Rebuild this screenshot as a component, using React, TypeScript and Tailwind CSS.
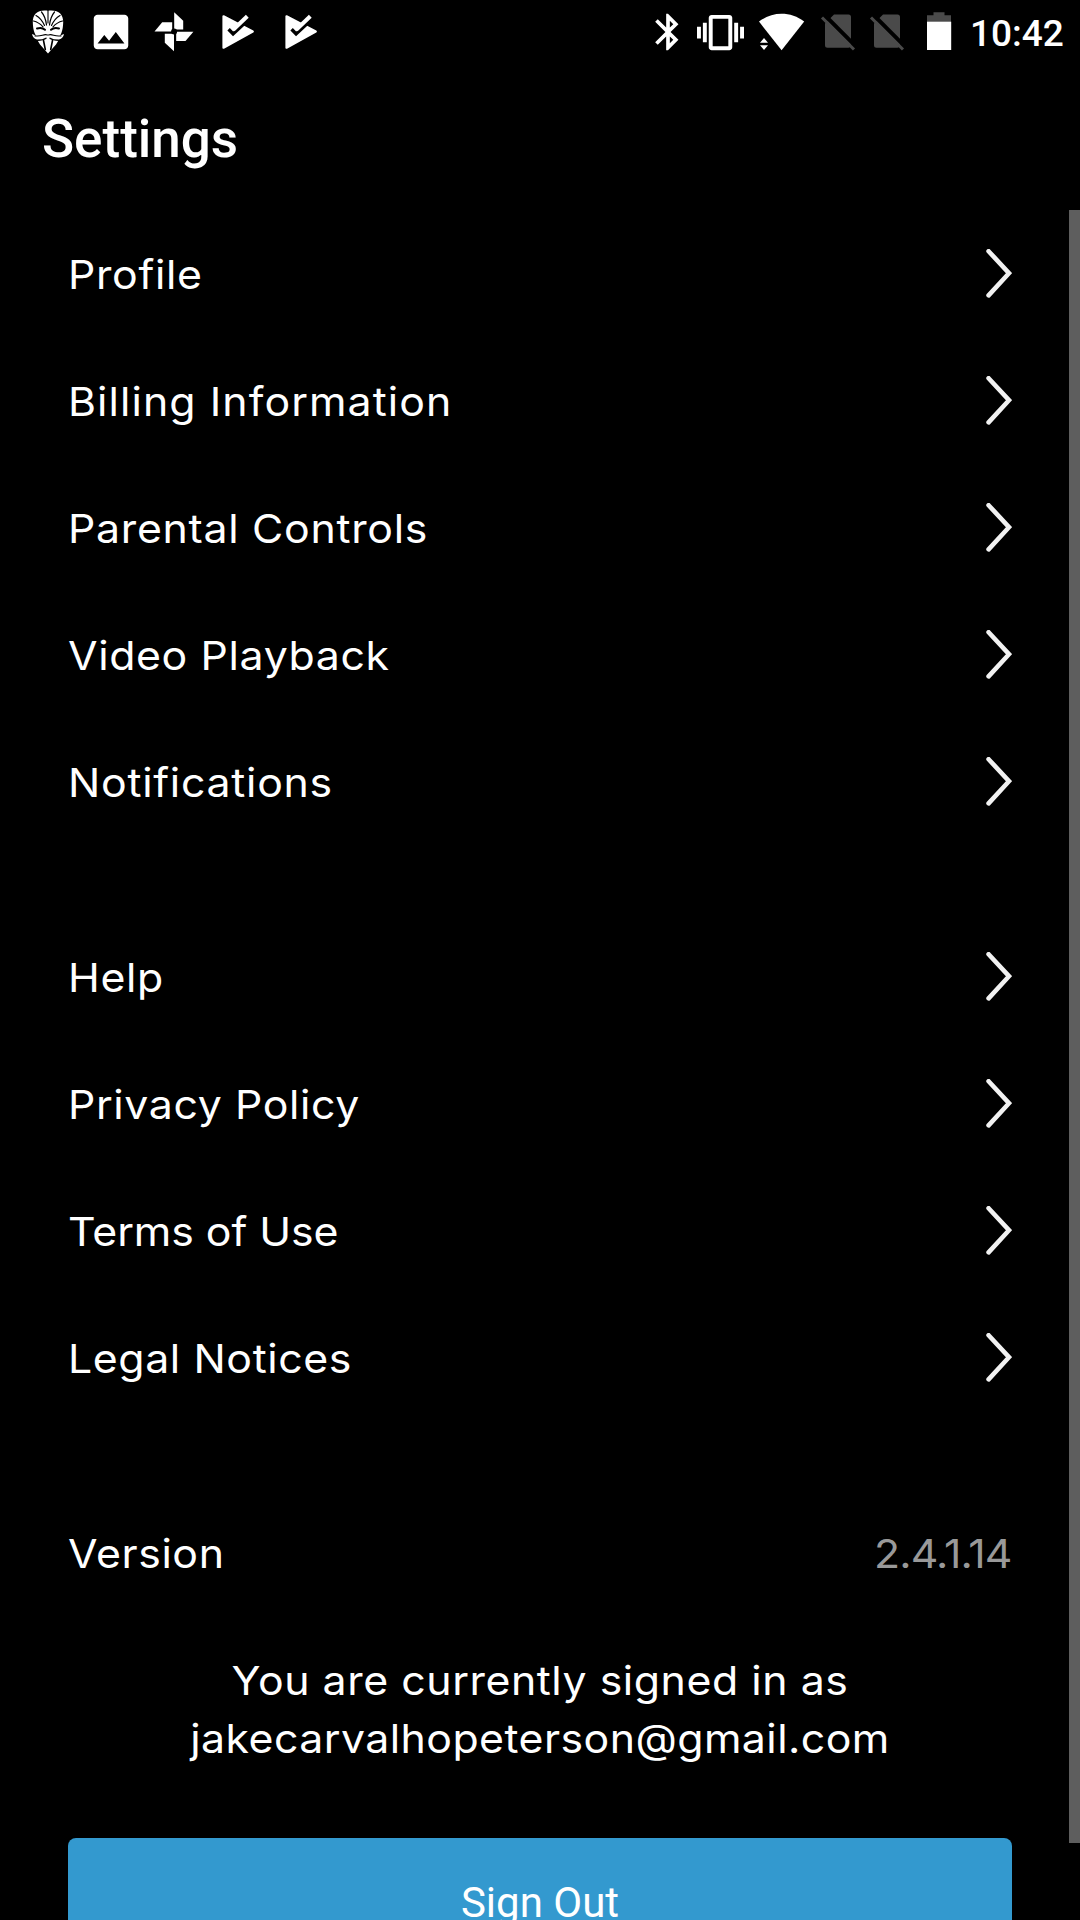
import type { ReactNode } from "react"
import { MdBluetooth, MdImage, MdVibration } from "react-icons/md"

type Item = { label: string; tracking: string }

const ACCOUNT_ITEMS: Item[] = [
  { label: "Profile", tracking: "tracking-[0.62px]" },
  { label: "Billing Information", tracking: "tracking-[1.02px]" },
  { label: "Parental Controls", tracking: "tracking-[0.67px]" },
  { label: "Video Playback", tracking: "tracking-[0.6px]" },
  { label: "Notifications", tracking: "tracking-[0.69px]" },
]

const SUPPORT_ITEMS: Item[] = [
  { label: "Help", tracking: "tracking-[0.56px]" },
  { label: "Privacy Policy", tracking: "tracking-[0.58px]" },
  { label: "Terms of Use", tracking: "tracking-[-0.05px]" },
  { label: "Legal Notices", tracking: "tracking-[0.57px]" },
]

function MaskIcon() {
  return (
    <svg viewBox="0 0 46 46" className="h-[46px] w-[46px]" fill="none">
      <path
        d="M23 1.8C13 .5 7.6 5 7.8 13c.1 4 .6 8 1.8 11l1.2 2.6L7 25c.6 3 2 4.8 5 5.6L15 35.5 23 44.5 31 35.5 34 30.6c3-.8 4.4-2.6 5-5.6l-3.8 1.6L36.4 24c1.2-3 1.7-7 1.8-11C38.4 5 33 .5 23 1.8z"
        fill="#fff"
      />
      <g stroke="#000" strokeLinecap="round">
        <path d="M23 1v13" strokeWidth="1.1" />
        <path d="M21.5 16C20.8 10 19 6 16.5 3M24.5 16C25.2 10 27 6 29.5 3" strokeWidth="1.2" />
        <path d="M19.5 16.5C17.5 12 14.5 8.5 11 6.5M26.5 16.5c2-4.5 5-8 8.5-10" strokeWidth="1.2" />
        <path d="M18 17.8C15 14.5 12 12.8 8.5 12M28 17.8c3-3.3 6-5 9.5-5.8" strokeWidth="1.2" />
        <path d="M12 19.5c3-1 6-.5 8 1.3M34 19.5c-3-1-6-.5-8 1.3" strokeWidth="2" />
        <path d="M22.5 26c-4-1.5-6 2-12.5.8M23.5 26c4-1.5 6 2 12.5.8" strokeWidth="1.2" />
        <path d="M12.5 31.2c4 0 6.5-.6 8.5-2M33.5 31.2c-4 0-6.5-.6-8.5-2" strokeWidth="1.4" />
        <path d="M18.5 31.5l1.8 9M27.5 31.5l-1.8 9" strokeWidth="1.6" />
      </g>
    </svg>
  )
}

function PinwheelIcon() {
  return (
    <svg viewBox="0 0 46 46" className="h-[46px] w-[46px]" fill="#fff">
      <path d="M23.2 3.3l9 8.4v8.8h-9z" />
      <path d="M42.4 22.7l-7.9 9.2h-9.3v-9.2z" />
      <path d="M23 42.2l-9.2-8.5v-9H23z" />
      <path d="M3.5 22.5l7.7-9.2h10v9.2z" />
      <circle cx="23.1" cy="22.6" r="3" fill="#000" />
    </svg>
  )
}

function PlayCheckIcon() {
  return (
    <svg viewBox="0 0 46 46" className="h-[46px] w-[46px]" fill="none">
      <path d="M9.5 7.3L38.8 22.6 9.5 38.7z" fill="#fff" stroke="#fff" strokeWidth="2.2" strokeLinejoin="round" />
      <path d="M14.6 20.2l4.5 4.7L37.5 7.8" stroke="#000" strokeWidth="3.4" />
      <path d="M19.2 20.8L33.3 7.3" stroke="#fff" strokeWidth="4" />
    </svg>
  )
}

function WifiIcon() {
  return (
    <svg viewBox="0 0 48 46" className="ml-[14px] h-[46px] w-[48px]" fill="#fff">
      <path d="M1 12.6C14 2 33 2 46.2 12.6L23.6 41.2z" />
      <path d="M6 29l4 4.8H2zM6 41l-4-4.8h8z" />
    </svg>
  )
}

function NoSimIcon({ className }: { className: string }) {
  return (
    <svg viewBox="0 0 36 46" className={`h-[46px] w-[36px] ${className}`} fill="none">
      <path d="M14 5.5h14.5A2.5 2.5 0 0 1 31 8v28a2.7 2.7 0 0 1-2.5 2.7h-21A2.5 2.5 0 0 1 5 36.2V14.5z" fill="#4a4a4a" />
      <path d="M4.5 6L37 38.5" stroke="#000" strokeWidth="4" />
      <path d="M2 8.5l32 32" stroke="#4a4a4a" strokeWidth="3" />
    </svg>
  )
}

function BatteryIcon() {
  return (
    <svg viewBox="0 0 26 46" className="ml-[21px] h-[46px] w-[26px]">
      <path d="M7.5 3.3h11v3H25v7H1v-7h6.5z" fill="#4a4a4a" />
      <path d="M1 12.7h24.2V41H1z" fill="#fff" />
    </svg>
  )
}

function StatusBar() {
  return (
    <header className="flex h-16 shrink-0 items-center justify-between pl-[24.5px] text-white">
      <div className="flex items-center gap-[17px]">
        <MaskIcon />
        <MdImage className="h-[46px] w-[46px]" />
        <PinwheelIcon />
        <PlayCheckIcon />
        <PlayCheckIcon />
      </div>
      <div className="flex items-center">
        <MdBluetooth className="h-[44px] w-[44px]" />
        <MdVibration className="ml-[7px] h-[47px] w-[47px]" />
        <WifiIcon />
        <NoSimIcon className="ml-[14px]" />
        <NoSimIcon className="ml-[13px]" />
        <BatteryIcon />
        <span className="ml-[18px] w-[110px] pt-[3px] font-['Roboto',sans-serif] text-[37px] font-medium leading-none">10:42</span>
      </div>
    </header>
  )
}

function Chevron() {
  return (
    <svg viewBox="0 0 26 50" className="h-[50px] w-[26px]" fill="none">
      <path d="M2.6 2.2L23 24.2 2.6 46.4" stroke="#f2f2f2" strokeWidth="4.6" strokeLinecap="round" />
    </svg>
  )
}

function Row({ label, tracking, children }: Item & { children: ReactNode }) {
  return (
    <li className="flex h-[127px] items-center justify-between">
      <span className={`origin-left scale-x-107 pt-0.5 ${tracking}`}>{label}</span>
      {children}
    </li>
  )
}

function Section({ items }: { items: Item[] }) {
  return (
    <ul>
      {items.map((item) => (
        <Row key={item.label} {...item}>
          <Chevron />
        </Row>
      ))}
    </ul>
  )
}

export default function App() {
  return (
    <div className="flex h-[1920px] w-[1080px] flex-col overflow-hidden bg-black text-white">
      <StatusBar />
      <h1 className="flex h-[146px] shrink-0 items-center pl-[42px] pt-1.5 font-['Roboto',sans-serif] text-[53px] font-medium">Settings</h1>

      <div className="flex flex-1 justify-between">
        <main className="flex flex-1 flex-col gap-[68px] pl-[68px] pr-[57px] font-['Inter',sans-serif] text-[40px] leading-[58px]">
          <Section items={ACCOUNT_ITEMS} />
          <Section items={SUPPORT_ITEMS} />
          <div>
            <ul>
              <Row label="Version" tracking="tracking-[0.56px]">
                <span className="origin-right scale-x-107 pt-0.5 tracking-[-0.79px] text-[#999]">2.4.1.14</span>
              </Row>
            </ul>
            <p className="mt-9 scale-x-107 text-center">
              <span className="tracking-[0.52px]">You are currently signed in as</span>
              <br />
              <span className="tracking-[0.42px]">jakecarvalhopeterson@gmail.com</span>
            </p>
            <button className="mt-[70px] h-[130px] w-full rounded-lg bg-[#3399cf] font-['Roboto',sans-serif] text-[42px]">Sign Out</button>
          </div>
        </main>
        {/* Scroll thumb */}
        <div className="h-[1633px] w-[11px] bg-[#5e5e5e]" />
      </div>
    </div>
  )
}
